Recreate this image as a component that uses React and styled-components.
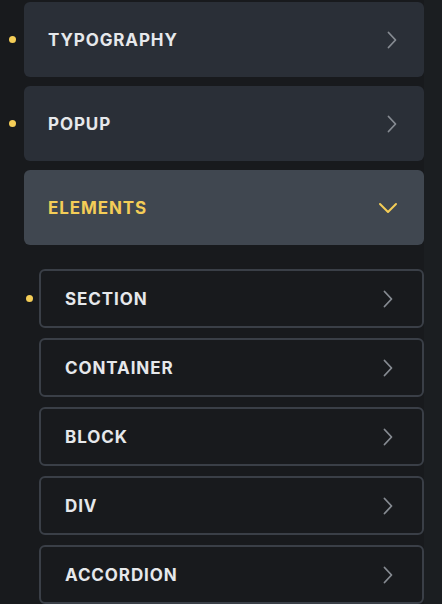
import React from 'react'
import styled, { createGlobalStyle } from 'styled-components'

const Global = createGlobalStyle`
    html, body {
        margin: 0;
        background: #181a1d;
    }
    body {
        font-family: Inter, "Noto Sans", sans-serif;
    }
`

const topItems = [
    { label: 'TYPOGRAPHY', dot: true },
    { label: 'POPUP', dot: true },
]

const subItems = [
    { label: 'SECTION', dot: true },
    { label: 'CONTAINER' },
    { label: 'BLOCK' },
    { label: 'DIV' },
    { label: 'ACCORDION' },
]

function ChevronRight() {
    return (
        <svg width="12" height="18" viewBox="0 0 12 18" fill="none">
            <path d="M2.5 1.5 L9.5 9 L2.5 16.5" stroke="#868b92" strokeWidth="1.8" strokeLinecap="round" strokeLinejoin="round" />
        </svg>
    )
}

function ChevronDown() {
    return (
        <svg width="20" height="12" viewBox="0 0 20 12" fill="none">
            <path d="M2 2 L10 10 L18 2" stroke="#f4cd57" strokeWidth="2" strokeLinecap="round" strokeLinejoin="round" />
        </svg>
    )
}

function App() {
    return (
        <Page>
            <Global />
            <Panel>
                {topItems.map(item => (
                    <Row key={item.label} $indent={24} $gap={8}>
                        {item.dot ? <Dot /> : <span />}
                        <Card>
                            <Label>{item.label}</Label>
                            <ChevronRight />
                        </Card>
                    </Row>
                ))}
                <Row $indent={24} $gap={8}>
                    <span />
                    <Card $open>
                        <Label $active>ELEMENTS</Label>
                        <ChevronDown />
                    </Card>
                </Row>
                <SubList>
                    {subItems.map(item => (
                        <Row key={item.label} $indent={39} $gap={6}>
                            {item.dot ? <Dot /> : <span />}
                            <SubCard>
                                <Label>{item.label}</Label>
                                <ChevronRight />
                            </SubCard>
                        </Row>
                    ))}
                </SubList>
            </Panel>
            <Track />
        </Page>
    )
}

export default App

const Page = styled.div`
    display: flex;
    width: 442px;
    height: 604px;
    overflow: hidden;
    background: #181a1d;
`

const Panel = styled.div`
    width: 424px;
    padding-top: 2px;
    display: flex;
    flex-direction: column;
    gap: 9px;
`

const Track = styled.div`
    flex: 1;
    background: #1b1e21;
`

const Row = styled.div`
    display: grid;
    grid-template-columns: ${p => p.$indent}px 1fr;
    align-items: center;
    & > span:first-child {
        justify-self: end;
        margin-right: ${p => p.$gap}px;
    }
`

const Dot = styled.span`
    width: 7px;
    height: 7px;
    border-radius: 50%;
    background: #f4cd57;
`

const Card = styled.div`
    height: 75px;
    box-sizing: border-box;
    padding: 0 26px 0 24px;
    display: flex;
    align-items: center;
    justify-content: space-between;
    border-radius: 6px;
    background: ${p => (p.$open ? '#404750' : '#2a2f37')};
`

const SubList = styled.div`
    margin-top: 15px;
    display: flex;
    flex-direction: column;
    gap: 10px;
`

const SubCard = styled.div`
    height: 59px;
    box-sizing: border-box;
    padding: 0 28px 0 24px;
    display: flex;
    align-items: center;
    justify-content: space-between;
    border: 2px solid #3a3f47;
    border-radius: 6px;
    background: #181a1d;
`

const Label = styled.span`
    font-size: 17px;
    font-weight: 700;
    letter-spacing: 0.9px;
    color: ${p => (p.$active ? '#f4cd57' : '#e6e8eb')};
`
